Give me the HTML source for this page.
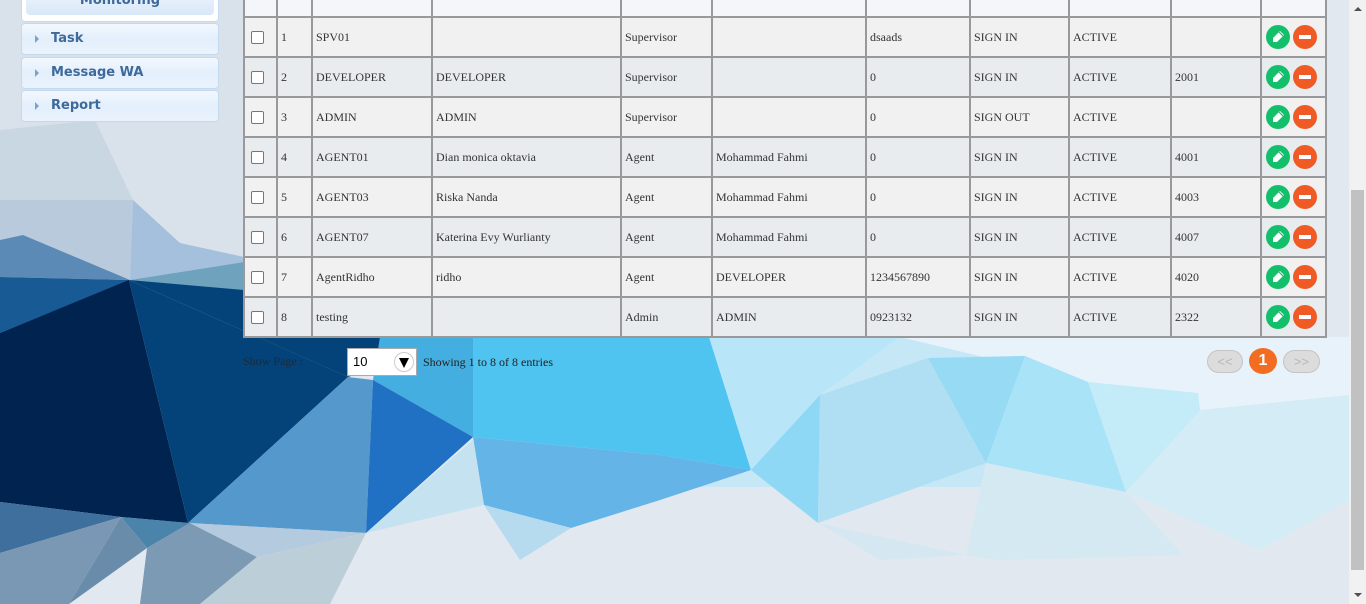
<!DOCTYPE html>
<html><head><meta charset="utf-8">
<style>
*{margin:0;padding:0;box-sizing:border-box}
body{width:1366px;height:604px;overflow:hidden;position:relative;background:#e4e9f0;font-family:"Liberation Serif",serif}
#bg{position:absolute;left:0;top:0}
.side{position:absolute;left:21px;width:198px;border:1px solid #c5d9ee;border-radius:4px;background:linear-gradient(#f3f8fe,#e3effc 50%,#eaf3fd);font-family:"DejaVu Sans","Liberation Sans",sans-serif;font-weight:bold;font-size:13px;color:#3d6a9a}
.side span.ar{position:absolute;left:13px;top:11px;width:0;height:0;border-left:4px solid #7aa3cc;border-top:4px solid transparent;border-bottom:4px solid transparent}
.side span.t{position:absolute;left:29px;top:7px}
table{position:absolute;left:243px;top:-24px;border-collapse:collapse;font-size:12px;color:#333}
td{border:2px solid #999;height:40px;padding:0 3px;vertical-align:middle;white-space:nowrap}
tr.h td{background:rgba(248,248,252,.85)}
tr.a td{background:#f1f1f1}
tr.b td{background:#e9ecef}
.cb{display:inline-block;width:13px;height:13px;border:1px solid #767676;border-radius:2px;background:#fff;vertical-align:middle;margin-left:3px}
.g,.o{display:inline-block;width:24px;height:24px;border-radius:50%;vertical-align:middle;position:relative}
.g{background:#13bf6a;margin-left:1px}
.o{background:#f05a24;margin-left:3px}
.o:after{content:"";position:absolute;left:6px;top:10px;width:12px;height:4px;background:#fff}
.g svg{position:absolute;left:5px;top:5px}
</style></head><body>
<svg id="bg" width="1366" height="604" viewBox="0 0 1366 604">
<rect width="1366" height="604" fill="#e2e8ef"/>
<polygon points="0,0 244,0 244,340 0,340" fill="#d9e2ea"/>
<polygon points="0,130 95,120 133,200 0,200" fill="#c9d7e3"/>
<polygon points="0,200 133,200 130,280 23,235 0,240" fill="#b8cadb"/>
<polygon points="133,200 180,243 244,257 244,262 130,280" fill="#a5c0dc"/>
<polygon points="0,240 23,235 130,280 0,277" fill="#5b8ab6"/>
<polygon points="130,280 244,262 244,337 348,377" fill="#6fa3bd"/>
<polygon points="0,277 130,280 0,333" fill="#175a94"/>
<rect x="660" y="337" width="689" height="150" fill="#c6e8f6"/>
<polygon points="900,337 1349,337 1349,400 1200,410 1088,382" fill="#e8f2fa"/>
<polygon points="129,280 244,290 470,337 348,377" fill="#04437a"/>
<polygon points="0,333 129,280 188,523 121,517 0,502" fill="#00234f"/>
<polygon points="129,280 348,377 188,523" fill="#04437a"/>
<polygon points="348,377 373,380 366,533 188,523" fill="#5599cc"/>
<polygon points="380,337 473,337 473,437 373,380" fill="#44aee0"/>
<polygon points="373,380 473,437 366,533" fill="#2070c4"/>
<polygon points="473,337 660,337 660,455 473,437" fill="#4fc4f1"/>
<polygon points="473,437 660,455 751,470 660,500 571,528 484,505" fill="#64b4e8"/>
<polygon points="660,337 709,337 751,470 660,455" fill="#4fc4f1"/>
<polygon points="709,337 900,337 820,395 751,470" fill="#b8e6f8"/>
<polygon points="751,470 820,395 818,523" fill="#8ed8f5"/>
<polygon points="820,395 928,358 986,463 818,523" fill="#b0dff4"/>
<polygon points="928,358 1025,356 986,463" fill="#96daf4"/>
<polygon points="1025,356 1088,382 1126,492 986,463" fill="#a9e3f7"/>
<polygon points="1088,382 1198,393 1200,410 1126,492" fill="#c3ebf8"/>
<polygon points="1200,410 1349,395 1349,500 1260,550 1126,492" fill="#d3ecf5"/>
<polygon points="986,463 1126,492 1183,555 1000,560 966,555" fill="#d5e9f2"/>
<polygon points="818,523 966,555 880,560" fill="#d5e8f2"/>
<polygon points="0,502 121,517 0,553" fill="#3f6f9c"/>
<polygon points="0,553 121,517 69,604 0,604" fill="#7a98b4"/>
<polygon points="121,517 190,523 147,548" fill="#4a84aa"/>
<polygon points="121,517 147,548 69,604" fill="#6a8cab"/>
<polygon points="147,548 190,523 257,557 200,604 140,604" fill="#7d9ab5"/>
<polygon points="190,523 366,533 257,557" fill="#b4cade"/>
<polygon points="257,557 366,533 330,604 200,604" fill="#bccfd9"/>
<polygon points="366,533 484,505 473,440" fill="#c4e2f0"/>
<polygon points="484,505 571,528 520,560" fill="#b6dbee"/>
</svg>

<div class="side" style="top:-6px;height:28px;background:#fff">
<div style="position:absolute;left:4px;right:4px;top:0;bottom:6px;border-radius:4px;background:linear-gradient(#e9f2fc,#d8e8f8);text-align:center;overflow:hidden"><span style="position:relative;top:-2px;line-height:14px">Monitoring</span></div></div>
<div class="side" style="top:23px;height:32px"><span class="ar"></span><span class="t">Task</span></div>
<div class="side" style="top:57px;height:32px"><span class="ar"></span><span class="t">Message WA</span></div>
<div class="side" style="top:90px;height:32px"><span class="ar"></span><span class="t">Report</span></div>

<table>
<colgroup><col style="width:33px"><col style="width:35px"><col style="width:120px"><col style="width:189px"><col style="width:91px"><col style="width:154px"><col style="width:104px"><col style="width:99px"><col style="width:102px"><col style="width:90px"><col style="width:65px"></colgroup>
<tr class="h"><td></td><td></td><td></td><td></td><td></td><td></td><td></td><td></td><td></td><td></td><td></td></tr>
<tr class="a"><td><span class="cb"></span></td><td>1</td><td>SPV01</td><td></td><td>Supervisor</td><td></td><td>dsaads</td><td>SIGN IN</td><td>ACTIVE</td><td></td><td><span class="g"><svg width="14" height="14" viewBox="0 0 14 14"><path d="M9 1l4 4-7 7H2V8z" fill="#fff"/><path d="M8 2l4 4" stroke="#13bf6a" stroke-width="1.2"/></svg></span><span class="o"></span></td></tr>
<tr class="b"><td><span class="cb"></span></td><td>2</td><td>DEVELOPER</td><td>DEVELOPER</td><td>Supervisor</td><td></td><td>0</td><td>SIGN IN</td><td>ACTIVE</td><td>2001</td><td><span class="g"><svg width="14" height="14" viewBox="0 0 14 14"><path d="M9 1l4 4-7 7H2V8z" fill="#fff"/><path d="M8 2l4 4" stroke="#13bf6a" stroke-width="1.2"/></svg></span><span class="o"></span></td></tr>
<tr class="a"><td><span class="cb"></span></td><td>3</td><td>ADMIN</td><td>ADMIN</td><td>Supervisor</td><td></td><td>0</td><td>SIGN OUT</td><td>ACTIVE</td><td></td><td><span class="g"><svg width="14" height="14" viewBox="0 0 14 14"><path d="M9 1l4 4-7 7H2V8z" fill="#fff"/><path d="M8 2l4 4" stroke="#13bf6a" stroke-width="1.2"/></svg></span><span class="o"></span></td></tr>
<tr class="b"><td><span class="cb"></span></td><td>4</td><td>AGENT01</td><td>Dian monica oktavia</td><td>Agent</td><td>Mohammad Fahmi</td><td>0</td><td>SIGN IN</td><td>ACTIVE</td><td>4001</td><td><span class="g"><svg width="14" height="14" viewBox="0 0 14 14"><path d="M9 1l4 4-7 7H2V8z" fill="#fff"/><path d="M8 2l4 4" stroke="#13bf6a" stroke-width="1.2"/></svg></span><span class="o"></span></td></tr>
<tr class="a"><td><span class="cb"></span></td><td>5</td><td>AGENT03</td><td>Riska Nanda</td><td>Agent</td><td>Mohammad Fahmi</td><td>0</td><td>SIGN IN</td><td>ACTIVE</td><td>4003</td><td><span class="g"><svg width="14" height="14" viewBox="0 0 14 14"><path d="M9 1l4 4-7 7H2V8z" fill="#fff"/><path d="M8 2l4 4" stroke="#13bf6a" stroke-width="1.2"/></svg></span><span class="o"></span></td></tr>
<tr class="b"><td><span class="cb"></span></td><td>6</td><td>AGENT07</td><td>Katerina Evy Wurlianty</td><td>Agent</td><td>Mohammad Fahmi</td><td>0</td><td>SIGN IN</td><td>ACTIVE</td><td>4007</td><td><span class="g"><svg width="14" height="14" viewBox="0 0 14 14"><path d="M9 1l4 4-7 7H2V8z" fill="#fff"/><path d="M8 2l4 4" stroke="#13bf6a" stroke-width="1.2"/></svg></span><span class="o"></span></td></tr>
<tr class="a"><td><span class="cb"></span></td><td>7</td><td>AgentRidho</td><td>ridho</td><td>Agent</td><td>DEVELOPER</td><td>1234567890</td><td>SIGN IN</td><td>ACTIVE</td><td>4020</td><td><span class="g"><svg width="14" height="14" viewBox="0 0 14 14"><path d="M9 1l4 4-7 7H2V8z" fill="#fff"/><path d="M8 2l4 4" stroke="#13bf6a" stroke-width="1.2"/></svg></span><span class="o"></span></td></tr>
<tr class="b"><td><span class="cb"></span></td><td>8</td><td>testing</td><td></td><td>Admin</td><td>ADMIN</td><td>0923132</td><td>SIGN IN</td><td>ACTIVE</td><td>2322</td><td><span class="g"><svg width="14" height="14" viewBox="0 0 14 14"><path d="M9 1l4 4-7 7H2V8z" fill="#fff"/><path d="M8 2l4 4" stroke="#13bf6a" stroke-width="1.2"/></svg></span><span class="o"></span></td></tr>
</table>

<div style="position:absolute;left:243px;top:354px;font-size:12px;color:#1a2a3a">Show Page :</div>
<div style="position:absolute;left:347px;top:348px;width:70px;height:28px;background:#fff;border:1px solid #aaa;font-family:'Liberation Sans',sans-serif;font-size:13px;padding:5px 0 0 5px;color:#000">10
<span style="position:absolute;right:2px;top:3px;width:20px;height:20px;border:1px solid #ccc;border-radius:50%;background:#fff"><span style="position:absolute;left:4px;top:5px;border-top:10px solid #000;border-left:5px solid transparent;border-right:5px solid transparent"></span></span></div>
<div style="position:absolute;left:423px;top:355px;font-size:12px;color:#222">Showing 1 to 8 of 8 entries</div>

<div style="position:absolute;left:1207px;top:350px;width:36px;height:23px;border:1px solid #c4c4c4;border-radius:12px;background:#dcdcdc;color:#b8b8b8;font-family:'Liberation Sans',sans-serif;font-size:13px;text-align:center;line-height:21px">&lt;&lt;</div>
<div style="position:absolute;left:1249px;top:348px;width:28px;height:26px;border-radius:50%;background:#f26d21;color:#fff;font-family:'Liberation Sans',sans-serif;font-weight:bold;font-size:16px;text-align:center;line-height:26px">1</div>
<div style="position:absolute;left:1283px;top:350px;width:37px;height:23px;border:1px solid #c4c4c4;border-radius:12px;background:#dcdcdc;color:#b8b8b8;font-family:'Liberation Sans',sans-serif;font-size:13px;text-align:center;line-height:21px">&gt;&gt;</div>

<div style="position:absolute;left:1349px;top:0;width:17px;height:604px;background:#f1f1f1"></div>
<div style="position:absolute;left:1351px;top:190px;width:13px;height:380px;background:#c1c1c1"></div>
<div style="position:absolute;left:1354px;top:7px;border-bottom:4px solid #505050;border-left:4px solid transparent;border-right:4px solid transparent"></div>
<div style="position:absolute;left:1354px;top:593px;border-top:4px solid #505050;border-left:4px solid transparent;border-right:4px solid transparent"></div>
</body></html>
